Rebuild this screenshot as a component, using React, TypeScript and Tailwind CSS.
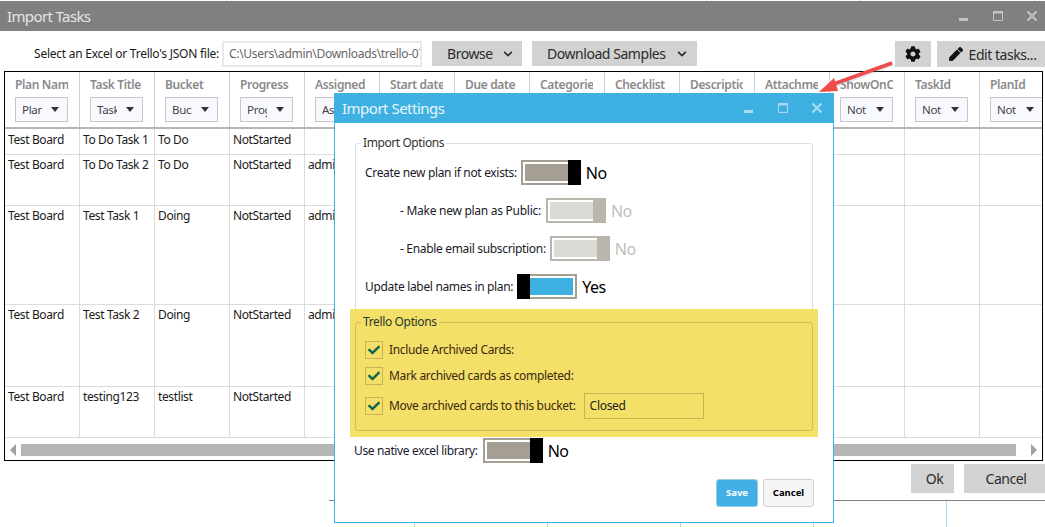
import React from "react";
import { FaCog, FaPen, FaCheck, FaChevronDown } from "react-icons/fa";

const font = "font-['Noto_Sans','Open_Sans',sans-serif]";
const gridCols = "grid-cols-[75px_repeat(12,75px)_62px]";

const columns: [string, string][] = [
  ["Plan Name", "Plan"],
  ["Task Title", "Task"],
  ["Bucket", "Bucket"],
  ["Progress", "Progress"],
  ["Assigned To", "Assigned"],
  ["Start date", "Not"],
  ["Due date", "Not"],
  ["Categories", "Not"],
  ["Checklist", "Not"],
  ["Description", "Not"],
  ["Attachments", "Not"],
  ["ShowOnCard", "Not"],
  ["TaskId", "Not"],
  ["PlanId", "Not"],
];

const rows: { h: string; pt: string; cells: string[] }[] = [
  { h: "h-[26px]", pt: "pt-[3px]", cells: ["Test Board", "To Do Task 1", "To Do", "NotStarted", ""] },
  { h: "h-[51px]", pt: "pt-[2px]", cells: ["Test Board", "To Do Task 2", "To Do", "NotStarted", "admin"] },
  { h: "h-[99px]", pt: "pt-[2px]", cells: ["Test Board", "Test Task 1", "Doing", "NotStarted", "admin"] },
  { h: "h-[82px]", pt: "pt-[2px]", cells: ["Test Board", "Test Task 2", "Doing", "NotStarted", "admin"] },
  { h: "h-[51px]", pt: "pt-[2px]", cells: ["Test Board", "testing123", "testlist", "NotStarted", ""] },
];

function Caret() {
  return (
    <svg width="8" height="5" viewBox="0 0 8 5" className="shrink-0">
      <path d="M0 0H8L4 5Z" fill="#333" />
    </svg>
  );
}

function WinControls({ stroke, fill }: { stroke: string; fill: string }) {
  return (
    <div className="flex items-center gap-[25px]">
      <span className={`block w-[9px] h-[3px] mt-[7px] ${fill}`} />
      <svg width="10" height="10" viewBox="0 0 10 10">
        <path d="M0.5 0.5H9.5V9.5H0.5Z" fill="none" stroke={stroke} strokeWidth="1" />
        <path d="M0 1.5H10" stroke={stroke} strokeWidth="2" />
      </svg>
      <svg width="10" height="10" viewBox="0 0 10 10" className="ml-[-1px]">
        <path d="M0.5 0.5L9.5 9.5M9.5 0.5L0.5 9.5" stroke={stroke} strokeWidth="2" />
      </svg>
    </div>
  );
}

function GrayButton({ className, children }: { className: string; children: React.ReactNode }) {
  return (
    <div className={`flex items-center bg-[#d2d2d2] text-[14px] text-[#2b2b2b] tracking-[-0.45px] ${className}`}>
      {children}
    </div>
  );
}

function Toggle({ on, disabled, label }: { on?: boolean; disabled?: boolean; label: string }) {
  const frame = disabled ? "border-[#bab6ae]" : "border-[#a59e93]";
  const inner = disabled ? "bg-[#dcdad7]" : on ? "bg-[#3fb0e2]" : "bg-[#a59e93]";
  const thumb = disabled ? "bg-[#bab6ae]" : "bg-black";
  const text = disabled ? "text-[#c0c0c0]" : "text-black";
  return (
    <div className="flex items-center">
      <div className={`flex w-[60px] h-[25px] ${on ? "flex-row-reverse" : ""}`}>
        <div className={`flex-1 border-[2px] ${on ? "border-l-0" : "border-r-0"} ${frame} bg-white p-[2px] ${on ? "pl-0" : "pr-0"}`}>
          <div className={`h-full ${inner}`} />
        </div>
        <div className={`w-[13px] h-full ${thumb}`} />
      </div>
      <span className={`ml-[5px] text-[16px] tracking-[-0.5px] ${text}`}>{label}</span>
    </div>
  );
}

function Check({ label, className }: { label: string; className?: string }) {
  return (
    <div className={`flex items-center ${className ?? ""}`}>
      <div className="flex items-center justify-center w-[18px] h-[18px] border-[1px] border-[#c6b455]">
        <FaCheck className="text-[#12664f] w-[12px] h-[12px]" />
      </div>
      <span className="ml-[6px] text-[12px] tracking-[-0.33px] text-[#3a2a10]">{label}</span>
    </div>
  );
}

export default function App() {
  return (
    <div className={`relative w-[1045px] h-[527px] overflow-hidden bg-white ${font}`}>
      {/* main window */}
      <div className="flex flex-col h-[501px] pt-[1px] border-b border-[#808080]">
        <div className="flex items-center justify-between h-[30px] bg-[#808080] pl-[7px] pr-[8px] shrink-0">
          <span className="text-[15px] text-[#e6e6e6] tracking-[-0.62px]">Import Tasks</span>
          <WinControls stroke="#c4c4c4" fill="bg-[#c4c4c4]" />
        </div>

        <div className="flex items-start h-[40px] pt-[10px] shrink-0">
          <span className="w-[219px] h-[26px] leading-[26px] text-right text-[12px] tracking-[-0.25px] text-[#1a1a1a]">
            Select an Excel or Trello's JSON file:
          </span>
          <div className="ml-[3px] w-[200px] h-[26px] border-[2px] border-[#e8e8e8] pl-[5px] leading-[21px] text-[12px] tracking-[-0.3px] text-[#666] overflow-hidden whitespace-nowrap">
            C:\Users\admin\Downloads\trello-07
          </div>
          <GrayButton className="ml-[10px] w-[90px] h-[25px] gap-[10px] pl-[15px]">
            Browse <FaChevronDown className="w-[10px] h-[10px]" />
          </GrayButton>
          <GrayButton className="ml-[10px] w-[165px] h-[25px] gap-[11px] pl-[15px]">
            Download Samples <FaChevronDown className="w-[10px] h-[10px]" />
          </GrayButton>
          <GrayButton className="ml-[198px] w-[36px] h-[26px] justify-center">
            <FaCog className="w-[16px] h-[16px] text-[#111]" />
          </GrayButton>
          <GrayButton className="ml-[6px] w-[108px] h-[26px] gap-[6px] justify-center pl-[3px]">
            <FaPen className="w-[14px] h-[14px] text-[#111]" /> Edit tasks...
          </GrayButton>
        </div>

        {/* data grid */}
        <div className="flex flex-col mx-[4px] w-[1039px] h-[390px] border border-black shrink-0">
          <div className={`grid ${gridCols} h-[57px] border-b-[2px] border-[#b5b5b5]`}>
            {columns.map(([title, filter], i) => (
              <div key={title} className={`pl-[10px] pt-[5px] overflow-hidden ${i < columns.length - 1 ? "border-r border-[#d0d0d0]" : ""}`}>
                <div className="w-[53px] h-[20px] leading-[16px] text-[12px] font-semibold tracking-[-0.35px] text-[#8a8a8a] whitespace-nowrap overflow-hidden">
                  {title}
                </div>
                <div className="flex items-center w-[53px] h-[25px] border-[1.5px] border-[#c8c8c8] bg-[#f8f8ff] pl-[6px] pr-[8px] justify-between">
                  <span className="w-[20px] overflow-hidden whitespace-nowrap text-[11.5px] tracking-[-0.3px] text-[#444]">{filter}</span>
                  <Caret />
                </div>
              </div>
            ))}
          </div>

          {rows.map((r) => (
            <div key={r.cells[1]} className={`grid ${gridCols} ${r.h} border-b border-[#dcdcdc]`}>
              {columns.map((_, i) => (
                <div
                  key={i}
                  className={`pl-[3px] ${r.pt} text-[12px] leading-[16px] tracking-[-0.38px] text-[#1a1a1a] whitespace-nowrap overflow-hidden ${i < columns.length - 1 ? "border-r border-[#dcdcdc]" : ""}`}
                >
                  {r.cells[i] ?? ""}
                </div>
              ))}
            </div>
          ))}

          <div className="flex items-center flex-1 px-[5px] pt-[1px]">
            <svg width="6" height="12" viewBox="0 0 6 12"><path d="M6 0V12L0 6Z" fill="#a0a0a0" /></svg>
            <div className="ml-[5px] w-[995px] h-[12px] bg-[#b5b5b5]" />
            <svg width="6" height="12" viewBox="0 0 6 12" className="ml-auto"><path d="M0 0V12L6 6Z" fill="#a0a0a0" /></svg>
          </div>
        </div>

        <div className="flex justify-end pt-[3px]">
          <GrayButton className="w-[43px] h-[29px] justify-center pl-[4px]">Ok</GrayButton>
          <GrayButton className="ml-[10px] w-[81px] h-[29px] justify-center pl-[3px]">Cancel</GrayButton>
        </div>
      </div>

      {/* fragments of the page behind the window */}
      <span className="absolute left-[226px] top-0 w-px h-px bg-[#cccccc]" />
      <span className="absolute left-[706px] top-0 w-px h-px bg-[#cccccc]" />
      <span className="absolute left-[859px] top-0 w-px h-px bg-[#cccccc]" />
      <span className="absolute left-[1034px] top-0 w-px h-px bg-[#cccccc]" />
      <span className="absolute left-[414px] top-[523px] w-px h-[4px] bg-[#a8d8ec]" />
      <span className="absolute left-[547px] top-[523px] w-px h-[4px] bg-[#a8d8ec]" />
      <span className="absolute left-[680px] top-[523px] w-px h-[4px] bg-[#a8d8ec]" />
      <span className="absolute left-[813px] top-[523px] w-px h-[4px] bg-[#a8d8ec]" />
      <span className="absolute left-[946px] top-[501px] w-px h-[26px] bg-[#a8d8ec]" />
      <span className="absolute left-0 top-[500px] w-[329px] h-px bg-white" />

      {/* Import Settings dialog */}
      <div className="absolute left-[334px] top-[93px] w-[500px] h-[430px] flex flex-col bg-white border border-[#3fb0e2] border-t-0">
        <div className="flex items-center justify-between h-[30px] bg-[#3fb0e2] pl-[7px] pr-[11px] shrink-0">
          <span className="mt-[1px] text-[15px] text-[#e8f6fc] tracking-[-0.5px]">Import Settings</span>
          <WinControls stroke="#a9dcf3" fill="bg-[#a9dcf3]" />
        </div>

        <div className="flex flex-col pl-[20px] pr-[20px] pt-[13px]">
          {/* Import Options */}
          <fieldset className="w-[458px] h-[175px] border border-[#d5dfe9] rounded-[3px] pl-[9px] m-0 min-w-0">
            <legend className="ml-[-4px] px-[2px] h-[14px] leading-[14px] text-[12px] tracking-[-0.42px] text-[#333]">Import Options</legend>
            <div className="flex flex-col">
              <div className="flex items-center mt-[10px] h-[25px]">
                <span className="text-[12px] tracking-[-0.33px] text-[#1a1a2a] mr-[4px]">Create new plan if not exists:</span>
                <Toggle label="No" />
              </div>
              <div className="flex items-center mt-[13px] h-[25px] pl-[35px]">
                <span className="text-[12px] tracking-[-0.27px] text-[#1a1a2a] mr-[5px]">- Make new plan as Public:</span>
                <Toggle label="No" disabled />
              </div>
              <div className="flex items-center mt-[13px] h-[25px] pl-[35px]">
                <span className="text-[12px] tracking-[-0.33px] text-[#1a1a2a] mr-[4px]">- Enable email subscription:</span>
                <Toggle label="No" disabled />
              </div>
              <div className="flex items-center mt-[13px] h-[25px]">
                <span className="text-[12px] tracking-[-0.33px] text-[#1a1a2a] mr-[4px]">Update label names in plan:</span>
                <Toggle label="Yes" on />
              </div>
            </div>
          </fieldset>

          {/* Trello options, highlighted */}
          <div className="relative mt-[-2px] ml-[-5px] w-[468px] h-[128px] bg-[#f4df68] px-[5px] pt-[6px]">
            <fieldset className="w-[458px] h-[116px] border border-[#cfbd5c] rounded-[3px] pl-[9px] m-0 min-w-0">
              <legend className="ml-[-4px] px-[2px] h-[14px] leading-[14px] text-[12px] tracking-[-0.36px] text-[#1f3a30]">Trello Options</legend>
              <Check label="Include Archived Cards:" className="mt-[12px]" />
              <Check label="Mark archived cards as completed:" className="mt-[8px]" />
              <div className="flex items-center mt-[8px]">
                <Check label="Move archived cards to this bucket:" />
                <div className="ml-[8px] w-[120px] h-[26px] border border-[#c6b455] pl-[5px] leading-[23px] text-[12px] tracking-[-0.3px] text-[#222]">
                  Closed
                </div>
              </div>
            </fieldset>
          </div>

          <div className="flex items-center mt-[1px] ml-[-1px] h-[25px]">
            <span className="text-[12px] tracking-[-0.36px] text-[#1a1a2a] mr-[5px]">Use native excel library:</span>
            <Toggle label="No" />
          </div>

          <div className="flex justify-end mt-[16px] mr-[-1px] gap-[5px]">
            <div className="flex items-center justify-center w-[42px] h-[28px] rounded-[3px] bg-[#40b0e6] border border-[#9cc9e2] text-[9.5px] font-bold text-white">Save</div>
            <div className="flex items-center justify-center w-[51px] h-[28px] rounded-[3px] bg-[#f5f5f5] border border-[#d0d0d0] text-[9.5px] font-bold text-black">Cancel</div>
          </div>
        </div>
      </div>

      {/* red annotation arrow */}
      <svg width="1045" height="527" className="absolute left-0 top-0 pointer-events-none">
        <path d="M892 62L828 86" stroke="#7a8a92" strokeOpacity="0.25" strokeWidth="4" transform="translate(1 2)" />
        <path d="M892 63L828 86" stroke="#ee4b4b" strokeWidth="3.5" />
        <path d="M819 92L834 78L838 91Z" fill="#ee4b4b" />
      </svg>
    </div>
  );
}
